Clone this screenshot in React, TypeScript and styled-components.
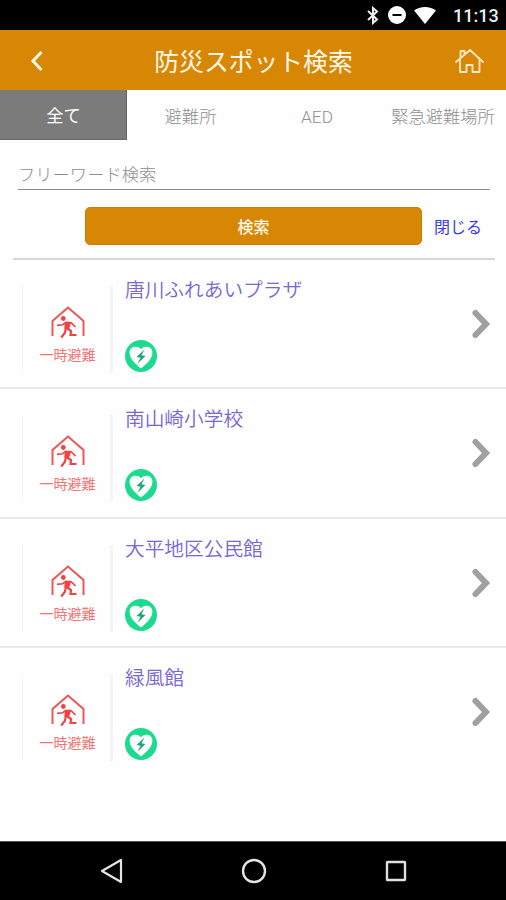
import React from 'react';
import styled, { createGlobalStyle } from 'styled-components';

const Global = createGlobalStyle`
  * { box-sizing: border-box; }
  body {
    margin: 0;
    background: #fefefe;
    font-family: Roboto, "Noto Sans CJK JP", sans-serif;
  }
  svg { display: block; flex: none; }
`;

const Screen = styled.div`
  width: 506px;
  height: 900px;
  display: flex;
  flex-direction: column;
  overflow: hidden;
  background: #fefefe;
`;

const StatusBar = styled.div`
  height: 30px;
  flex: none;
  display: flex;
  align-items: center;
  justify-content: flex-end;
  padding-right: 9px;
  background: #000;
  color: #eee;
`;

const StatusIcons = styled.div`
  display: flex;
  align-items: center;
  gap: 7px;
`;

const Clock = styled.span`
  margin-left: 16px;
  width: 44px;
  white-space: nowrap;
  font: 500 18px/30px Roboto, sans-serif;
  padding-top: 2px;
`;

const Header = styled.header`
  height: 60px;
  flex: none;
  display: grid;
  grid-template-columns: 74px 1fr 74px;
  align-items: center;
  justify-items: center;
  padding-top: 1px;
  background: #d88704;
  color: #fff8ea;
`;

const Title = styled.h1`
  margin: 0 0 0 1px;
  font: 400 24.8px/58px "Noto Sans CJK JP", sans-serif;
  white-space: nowrap;
  padding-bottom: 1px;
`;

const Tabs = styled.nav`
  height: 50px;
  flex: none;
  display: grid;
  grid-template-columns: 127px 127px 126px 126px;
  grid-template-rows: 50px;
`;

const Tab = styled.button<{ $active?: boolean }>`
  border: 0;
  border-right: ${p => (p.$active ? '1px solid #646464' : '0')};
  border-bottom: ${p => (p.$active ? '1px solid #696969' : '0')};
  padding: ${p => (p.$active ? '3px 0 0 1px' : '3px 0 0 0')};
  background: ${p => (p.$active ? '#7b7b7b' : 'transparent')};
  color: ${p => (p.$active ? '#fff' : '#8f8f8f')};
  font: ${p => (p.$active ? 400 : 300)} 17.3px/46px Roboto, "Noto Sans CJK JP", sans-serif;
  white-space: nowrap;
`;

const SearchPanel = styled.section`
  height: 120px;
  flex: none;
  margin: 0 11px 0 13px;
  padding: 20px 5px 0;
  border-bottom: 2px solid #d6d6d6;
`;

const Keyword = styled.input`
  display: block;
  width: 472px;
  height: 30px;
  border: 0;
  border-bottom: 1.5px solid #8c8c8c;
  padding: 0 0 3px;
  outline: 0;
  background: transparent;
  font: 300 17.3px/26px "Noto Sans CJK JP", sans-serif;
  &::placeholder { color: #8f8f8f; opacity: 1; }
`;

const Actions = styled.div`
  display: flex;
  align-items: center;
  margin: 17px 0 0 67px;
`;

const SearchButton = styled.button`
  width: 337px;
  height: 38px;
  border: 1px solid #cc7c00;
  border-radius: 5px;
  padding: 0;
  background: #d88704;
  color: #fff8ea;
  font: 500 16px/36px "Noto Sans CJK JP", sans-serif;
`;

const CloseLink = styled.a`
  margin-left: 12px;
  color: #3a3aea;
  font: 400 16px/36px "Noto Sans CJK JP", sans-serif;
  white-space: nowrap;
`;

const List = styled.main`
  flex: 1;
`;

const Row = styled.article<{ $last?: boolean }>`
  height: 129.3px;
  border-bottom: ${p => (p.$last ? '0' : '2px solid #e9e9e9')};
  display: flex;
  padding: 0 15px 0 22px;
`;

const Thumb = styled.div`
  width: 91px;
  height: 87px;
  margin-top: 26px;
  border-left: 1.5px solid #f6f6f6;
  border-right: 3px solid #f5f5f5;
  display: flex;
  flex-direction: column;
  align-items: center;
  padding: 19px 0 0 2px;
  color: #ee4444;
`;

const ThumbLabel = styled.span`
  margin-top: 6px;
  color: #f07474;
  font: 400 14px/18px "Noto Sans CJK JP", sans-serif;
  white-space: nowrap;
`;

const Details = styled.div`
  flex: 1;
  display: flex;
  flex-direction: column;
  padding: 14px 0 0 12px;
`;

const Name = styled.h2`
  margin: 0 0 36px;
  color: #7966d2;
  font: 350 19.7px/30px "Noto Sans CJK JP", sans-serif;
`;

const ArrowCell = styled.div`
  padding-top: 48px;
`;

const NavBar = styled.footer`
  height: 59px;
  flex: none;
  display: flex;
  align-items: center;
  justify-content: space-between;
  padding: 0 98px 0 100px;
  border-top: 1px solid #555;
  background: #000;
`;

const BluetoothIcon = () => (
  <svg width="12" height="19" viewBox="0 0 12 19" fill="none" stroke="#eee" strokeWidth="2">
    <path d="M1 5l9 8.500-4 3.500V2l4 3.500L1 14" />
  </svg>
);

const BlockIcon = () => (
  <svg width="20" height="20" viewBox="0 0 20 20">
    <circle cx="11" cy="10" r="9" fill="#fff" />
    <path d="M6.500 10h9" stroke="#000" strokeWidth="2" />
  </svg>
);

const WifiIcon = () => (
  <svg width="24" height="19" viewBox="0 0 24 19">
    <path d="M1 4.500C7-.3 17-.3 23 4.500L12 18z" fill="#fff" />
  </svg>
);

const BackIcon = () => (
  <svg width="16" height="22" viewBox="0 0 16 22" fill="none" stroke="#fff8ea" strokeWidth="3">
    <path d="M12.500 2L4 11l8.500 9" />
  </svg>
);

const HomeIcon = () => (
  <svg width="30" height="26" viewBox="0 0 30 26" fill="none" stroke="#ffe9c8" strokeWidth="1.8" strokeLinejoin="round" strokeLinecap="round">
    <path d="M2 14L16 2l13 12M6.500 10V3h4v3.500M6 12v12h6.500v-7h6v7h7V12" />
  </svg>
);

const ShelterIcon = () => (
  <svg width="36" height="34" viewBox="0 0 36 34" fill="none" stroke="currentColor">
    <path d="M2.500 31V16L18 2.500 33.500 16v15" strokeWidth="2" stroke="#ee5656" />
    <circle cx="13.300" cy="13.500" r="2.400" fill="currentColor" stroke="none" />
    <path d="M7 20.300l5.500-.5 3-2.300 6 .5 4 4" strokeWidth="1.700" />
    <path d="M15.500 17.500h5l-2.200 6.500-3.300-.8z" fill="currentColor" strokeWidth="1.400" />
    <path d="M16 23l-1.200 5-3.600 4.500M17.500 23.500l3.500 2.500-.5 4h6" strokeWidth="2.200" />
  </svg>
);

const AedIcon = () => (
  <svg width="32" height="32" viewBox="0 0 32 32">
    <circle cx="16" cy="16" r="16" fill="#1cdb8e" />
    <path d="M16 28.500C10 23.500 4.600 19 4.600 12.500c0-6 7.500-7.500 11.400-3.200C19.900 5 27.400 6.500 27.400 12.500c0 6.500-5.400 11-11.400 16z" fill="#fff" />
    <path d="M19.500 9.500l-8 7.500 4 .7-3 6 8-7.700-4-.7z" fill="#20a874" />
  </svg>
);

const ArrowIcon = () => (
  <svg width="20" height="32" viewBox="0 0 20 32" fill="none" stroke="#a0a0a0" strokeWidth="6" strokeLinecap="round">
    <path d="M4.500 5L15 16 4.500 27" />
  </svg>
);

const spots = ['唐川ふれあいプラザ', '南山崎小学校', '大平地区公民館', '緑風館'];
const categories = ['全て', '避難所', 'AED', '緊急避難場所'];

export default function App() {
  return (
    <Screen>
      <Global />
      <StatusBar>
        <StatusIcons>
          <BluetoothIcon />
          <BlockIcon />
          <WifiIcon />
        </StatusIcons>
        <Clock>11:13</Clock>
      </StatusBar>
      <Header>
        <BackIcon />
        <Title>防災スポット検索</Title>
        <HomeIcon />
      </Header>
      <Tabs>
        {categories.map((label, i) => (
          <Tab key={label} $active={i === 0}>{label}</Tab>
        ))}
      </Tabs>
      <SearchPanel>
        <Keyword placeholder="フリーワード検索" />
        <Actions>
          <SearchButton>検索</SearchButton>
          <CloseLink>閉じる</CloseLink>
        </Actions>
      </SearchPanel>
      <List>
        {spots.map((name, i) => (
          <Row key={name} $last={i === spots.length - 1}>
            <Thumb>
              <ShelterIcon />
              <ThumbLabel>一時避難</ThumbLabel>
            </Thumb>
            <Details>
              <Name>{name}</Name>
              <AedIcon />
            </Details>
            <ArrowCell>
              <ArrowIcon />
            </ArrowCell>
          </Row>
        ))}
      </List>
      <NavBar>
        <svg width="24" height="26" viewBox="0 0 24 26" fill="none" stroke="#e4e4e4" strokeWidth="2.200" strokeLinejoin="round">
          <path d="M21 2v22L2 13z" />
        </svg>
        <svg width="26" height="26" viewBox="0 0 26 26" fill="none" stroke="#e4e4e4" strokeWidth="2.400">
          <circle cx="13" cy="13" r="11" />
        </svg>
        <svg width="24" height="24" viewBox="0 0 24 24" fill="none" stroke="#e0e0e0" strokeWidth="2.400">
          <rect x="3" y="3" width="18" height="18" rx="0.500" />
        </svg>
      </NavBar>
    </Screen>
  );
}
